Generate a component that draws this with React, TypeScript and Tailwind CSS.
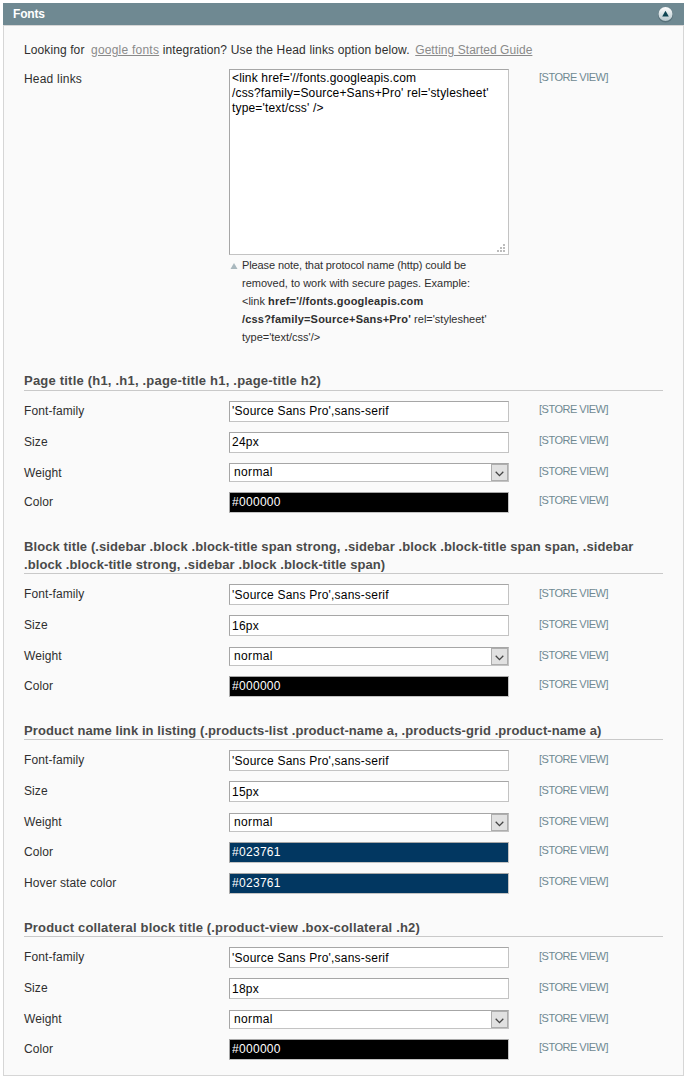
import React from "react";

type Kind = "text" | "select" | "color";

interface Field {
  label: string;
  kind: Kind;
  value: string;
  /** Row height, including the gap to the next row. */
  row: string;
  /** Padding that sets the text line inside the control. */
  control: string;
  labelPad: string;
  scopePad: string;
}

interface Group {
  title: React.ReactNode;
  titleClass: string;
  fields: Field[];
}

const text = (label: string, value: string, extra: Partial<Field> = {}): Field => ({
  label,
  kind: "text",
  value,
  row: "h-[31px]",
  control: "pt-[3px] pb-[2px] bg-white text-black tracking-[0.22px]",
  labelPad: "pt-[3px]",
  scopePad: "pt-[3px]",
  ...extra,
});

const weight = (extra: Partial<Field> = {}): Field => ({
  label: "Weight",
  kind: "select",
  value: "normal",
  row: "h-[29px]",
  control: "",
  labelPad: "pt-[2px]",
  scopePad: "pt-[2px]",
  ...extra,
});

const color = (label: string, value: string, bg: string): Field => ({
  label,
  kind: "color",
  value,
  row: "h-[31px]",
  control: `pt-[2px] pb-[3px] tracking-[0.3px] text-white ${bg}`,
  labelPad: "pt-[3px]",
  scopePad: "pt-[2px]",
});

const family = "'Source Sans Pro',sans-serif";
const raised = "pt-[2px] pb-[3px] bg-white text-black tracking-[0.22px]";

const groups: Group[] = [
  {
    title: "Page title (h1, .h1, .page-title h1, .page-title h2)",
    titleClass: "h-[19px] tracking-[0.21px]",
    fields: [
      text("Font-family", family, { control: raised, scopePad: "pt-[2px]" }),
      text("Size", "24px", { control: raised, scopePad: "pt-[2px]" }),
      weight({ labelPad: "pt-[3px]" }),
      color("Color", "#000000", "bg-black"),
    ],
  },
  {
    title: (
      <>
        Block title (.sidebar .block .block-title span strong, .sidebar .block .block-title span span, .sidebar
        <br />
        .block .block-title strong, .sidebar .block .block-title span)
      </>
    ),
    titleClass: "h-[36px] tracking-[0.095px]",
    fields: [
      text("Font-family", family),
      text("Size", "16px", { row: "h-[32px]" }),
      weight(),
      color("Color", "#000000", "bg-black"),
    ],
  },
  {
    title: "Product name link in listing (.products-list .product-name a, .products-grid .product-name a)",
    titleClass: "h-[18px] tracking-[0.09px]",
    fields: [
      text("Font-family", family),
      text("Size", "15px", { row: "h-[32px]" }),
      weight(),
      color("Color", "#023761", "bg-[#023761]"),
      color("Hover state color", "#023761", "bg-[#023761]"),
    ],
  },
  {
    title: "Product collateral block title (.product-view .box-collateral .h2)",
    titleClass: "h-[18px] tracking-[0.165px]",
    fields: [
      text("Font-family", family),
      text("Size", "18px", { row: "h-[32px]" }),
      weight(),
      color("Color", "#000000", "bg-black"),
    ],
  },
];

const border = "border border-[#c3c3c3] border-t-[#a6a6a6] border-l-[#a6a6a6]";

function Scope({ pad }: { pad: string }) {
  return (
    <div className={`text-[11px] leading-[12px] tracking-[-0.5px] whitespace-nowrap text-[#6f8992] ${pad}`}>
      [STORE VIEW]
    </div>
  );
}

function Control({ field }: { field: Field }) {
  if (field.kind === "select") {
    return (
      <div className={`flex h-[19px] w-[280px] bg-white ${border}`}>
        <select
          aria-label={field.label}
          defaultValue={field.value}
          className="h-[17px] flex-1 appearance-none bg-white pb-[1px] pl-[4px] text-[12px] leading-[14px] tracking-[0.35px] text-black outline-none"
        >
          <option>normal</option>
          <option>bold</option>
        </select>
        <span className="flex h-[17px] w-[17px] items-center justify-center border border-[#adadad] bg-[#e1e1e1]">
          <svg width="9" height="6" viewBox="0 0 9 6" className="mt-[2px]" fill="none" stroke="#444" strokeWidth="1.3">
            <path d="M0.7 0.8 L4.5 4.6 L8.3 0.8" />
          </svg>
        </span>
      </div>
    );
  }
  return (
    <input
      aria-label={field.label}
      defaultValue={field.value}
      className={`block h-[21px] w-[280px] px-[2px] text-[12px] leading-[14px] outline-none ${border} ${field.control}`}
    />
  );
}

function Row({ field }: { field: Field }) {
  return (
    <div className={`grid grid-cols-[205px_310px_1fr] items-start ${field.row}`}>
      <label className={`leading-[14px] tracking-[0.1px] ${field.labelPad}`}>{field.label}</label>
      <Control field={field} />
      <Scope pad={field.scopePad} />
    </div>
  );
}

function Resizer() {
  return (
    <svg width="9" height="9" viewBox="0 0 9 9" fill="#bcbcbc" className="absolute right-[3px] bottom-[2px]">
      <path d="M6 0h2v2h-2z M3 3h2v2h-2z M6 3h2v2h-2z M0 6h2v2h-2z M3 6h2v2h-2z M6 6h2v2h-2z" />
    </svg>
  );
}

export default function App() {
  return (
    <div className="h-[1079px] w-[688px] bg-white pt-[3px] pl-[3px] font-['Liberation_Sans',Arial,sans-serif] text-[12px] text-[#2f2f2f]">
      <section className="w-[681px]">
        <header className="flex h-[22px] items-center justify-between bg-[#6f8992] pr-[10px] pl-[10px]">
          <h2 className="text-[12px] leading-[14px] font-bold tracking-[-0.2px] text-white">Fonts</h2>
          <svg width="17" height="17" viewBox="0 0 17 17">
            <defs>
              <linearGradient id="knob" x1="0" y1="0" x2="0" y2="1">
                <stop offset="0" stopColor="#ffffff" />
                <stop offset="1" stopColor="#b4c6cc" />
              </linearGradient>
            </defs>
            <circle cx="8.5" cy="9" r="7.5" fill="#58727b" />
            <circle cx="8.5" cy="8" r="7" fill="url(#knob)" />
            <path d="M8.5 4.8 L11.8 10.4 H5.2 Z" fill="#0d4452" />
          </svg>
        </header>
        <div className="h-[1051px] border border-[#d6d6d6] bg-[#fafafa] px-[20px] pt-[17px]">
          <p className="h-[26px] leading-[14px] tracking-[0.155px] whitespace-nowrap">
            <span className="tracking-[0.1px]">Looking for</span>{" "}
            <a className="ml-[3px] tracking-[0.23px] text-[#8a8a8a] underline">google fonts</a> integration? Use the
            Head links option below.{" "}
            <a className="ml-[2px] tracking-[0.05px] text-[#8a8a8a] underline">Getting Started Guide</a>
          </p>
          <div className="grid h-[303px] grid-cols-[205px_310px_1fr] items-start">
            <label className="pt-[3px] leading-[14px] tracking-[0.2px]">Head links</label>
            <div>
              <div className="relative h-[186px] w-[280px]">
                <textarea
                  aria-label="Head links"
                  defaultValue={"<link href='//fonts.googleapis.com\n/css?family=Source+Sans+Pro' rel='stylesheet'\ntype='text/css' />"}
                  className={`block h-[186px] w-[280px] resize-none overflow-hidden bg-white px-[2px] pt-[1px] text-[12px] leading-[15px] tracking-[0.17px] text-black outline-none ${border}`}
                />
                <Resizer />
              </div>
              <div className="flex pt-[1px]">
                <svg width="13" height="18" viewBox="0 0 13 18" className="shrink-0">
                  <path d="M5 7 L8.5 13 H1.5 Z" fill="#a9b8be" />
                </svg>
                <p className="text-[11px] leading-[18px] whitespace-nowrap">
                  <span className="tracking-[-0.1px]">Please note, that protocol name (http) could be</span>
                  <br />
                  removed, to work with secure pages. Example:
                  <br />
                  &lt;link <b className="tracking-[0.21px]">href='//fonts.googleapis.com</b>
                  <br />
                  <b className="tracking-[0.19px]">/css?family=Source+Sans+Pro'</b> rel='stylesheet'
                  <br />
                  type='text/css'/&gt;
                </p>
              </div>
            </div>
            <div className="pt-[2px]">
              <Scope pad="" />
            </div>
          </div>
          <div className="flex flex-col">
            {groups.map((g, i) => (
              <div key={i} className="pb-[15px]">
                <h3
                  className={`mb-[10px] w-[639px] border-b border-[#c9c9c9] text-[13px] leading-[18px] font-bold whitespace-nowrap text-[#4a4a4a] ${g.titleClass}`}
                >
                  {g.title}
                </h3>
                {g.fields.map((f, j) => (
                  <Row key={j} field={f} />
                ))}
              </div>
            ))}
          </div>
        </div>
      </section>
    </div>
  );
}
